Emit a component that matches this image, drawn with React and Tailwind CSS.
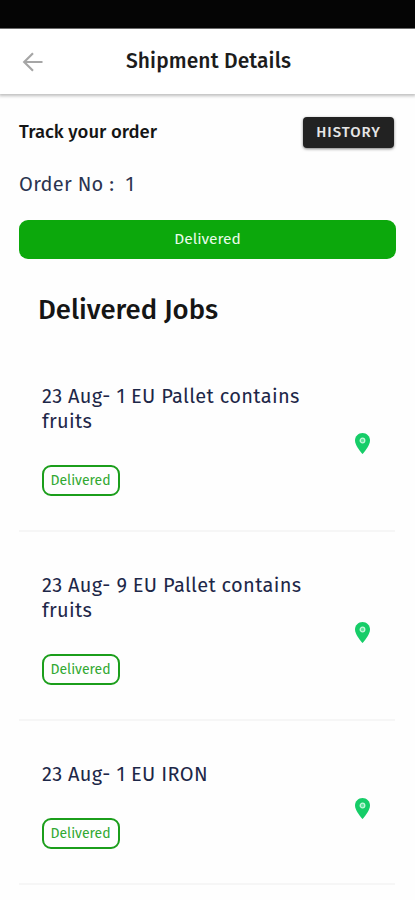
const jobs = [
  { title: '23 Aug- 1 EU Pallet contains fruits' },
  { title: '23 Aug- 9 EU Pallet contains fruits' },
  { title: '23 Aug- 1 EU IRON' },
];

function BackArrow() {
  return (
    <svg className="h-[20px] w-[22px]" viewBox="0 0 22 20" fill="none" stroke="#a6a6a6" strokeWidth="2.2">
      <path d="M20.5 10H2.5M11 1.2L2.2 10L11 18.8" />
    </svg>
  );
}

function Pin() {
  return (
    <svg className="h-[21px] w-[15px]" viewBox="0 0 15 21">
      <path d="M7.5 0C3.3 0 0 3.3 0 7.4C0 12.8 7.5 21 7.5 21S15 12.8 15 7.4C15 3.3 11.7 0 7.5 0Z" fill="#16cd68" />
      <circle cx="7.5" cy="7.5" r="2.3" fill="#5fe09a" stroke="#c4f6da" strokeWidth="1.3" />
    </svg>
  );
}

function Job({ title }) {
  return (
    <li className="flex items-center border-b-2 border-[#f6f6f6] pl-[23px] pr-[25px]">
      <div className="flex-1 pt-[41px] pb-[34px]">
        <p className="w-[285px] text-[20px] leading-[25px] tracking-[0.33px] text-[#1d2748]">{title}</p>
        <span className="mt-[31px] flex h-[31px] w-[78px] items-center justify-center rounded-[9px] border-2 border-[#1b9e1b] pr-px text-[14px] text-[#31a831]">
          Delivered
        </span>
      </div>
      <div className="-ml-5 pt-[13px]">
        <Pin />
      </div>
    </li>
  );
}

export default function App() {
  return (
    <div className="h-[900px] w-full overflow-hidden bg-[#fefefe] font-['Fira_Sans','Noto_Sans',sans-serif]">
      <div className="h-[29px] border-b border-[#777] bg-[#050505]" />
      <header className="grid h-[65px] grid-cols-[1fr_auto_1fr] items-center bg-white pl-[22px] pr-[20px] shadow-[0_1px_3px_1px_rgba(0,0,0,0.25)]">
        <BackArrow />
        <h1 className="text-[21px] font-medium tracking-[0.1px] text-[#1c1c1c]">Shipment Details</h1>
      </header>
      <main className="pt-[23px] pl-[19px] pr-[19px]">
        <div className="flex h-[31px] items-center justify-between">
          <h2 className="text-[18.5px] font-medium text-[#151515]">Track your order</h2>
          <button className="mr-[2px] h-[31px] w-[91px] rounded-[4px] bg-[#222] text-[15px] font-medium tracking-[1px] text-[#e6e6e6] shadow-[0_1px_3px_rgba(0,0,0,0.5)]">
            HISTORY
          </button>
        </div>
        <p className="mt-[23px] h-[26px] whitespace-pre text-[20px] leading-[26px] tracking-[0.3px] text-[#2b3350]">Order No :  1</p>
        <div className="mt-[23px] flex h-[39px] items-center justify-center rounded-[9px] bg-[#0ca80c] text-[15.5px] text-[#eafbea]">
          Delivered
        </div>
        <h2 className="mt-[31px] h-[40px] pl-[19px] text-[27.5px] leading-[39px] font-medium text-[#151515]">Delivered Jobs</h2>
        <ul className="mt-[13px] w-[376px]">
          {jobs.map((job) => (
            <Job key={job.title} title={job.title} />
          ))}
        </ul>
      </main>
    </div>
  );
}
